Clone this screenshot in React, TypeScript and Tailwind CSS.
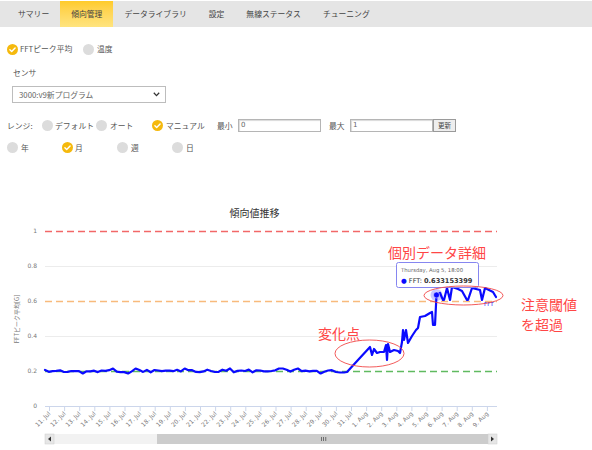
import React from "react";

function Radio({ checked }: { checked?: boolean }) {
  if (checked) {
    return (
      <svg width="11" height="11" viewBox="0 0 11 11" className="shrink-0">
        <circle cx="5.5" cy="5.5" r="5.5" fill="#f5b90d" />
        <path d="M2.9 5.7 L4.7 7.5 L8.1 3.9" fill="none" stroke="#fff" strokeWidth="1.4" strokeLinecap="round" strokeLinejoin="round" />
      </svg>
    );
  }
  return <span className="block w-[11px] h-[11px] rounded-full bg-[#dcdcdc] shrink-0" />;
}

function Opt({ checked, label, w, gap = "gap-[3px]" }: { checked?: boolean; label: string; w: string; gap?: string }) {
  return (
    <div className={`flex items-center ${gap} ${w} shrink-0`}>
      <Radio checked={checked} />
      <span className="whitespace-nowrap">{label}</span>
    </div>
  );
}

const tabs = ["サマリー", "傾向管理", "データライブラリ", "設定", "無線ステータス", "チューニング"];

function noise(i: number) {
  const s = Math.sin(i * 12.9898 + 78.233) * 43758.5453;
  return s - Math.floor(s);
}

function buildPath() {
  const pts: [number, number][] = [];
  for (let i = 0; ; i++) {
    const x = 45 + i * 3.775;
    if (x > 332) break;
    const r = noise(i);
    let y = 371 + (r - 0.5) * 3.2;
    if (r > 0.93) y = 368.5;
    if (r < 0.06) y = 373.5;
    pts.push([x, y]);
  }
  const tail: [number, number][] = [
    [336, 372], [340, 372.5], [344, 372.5], [347, 372], [358, 360], [370, 347], [372, 355], [374, 349], [377, 353], [380, 352], [384, 352],
    [386, 345], [387, 360], [388, 344], [390, 352], [394, 350], [398, 351], [400, 353], [402, 342], [403, 330], [404, 340],
    [406, 330], [408, 343], [412, 336], [416, 330], [418, 328], [420, 317], [425, 316], [430, 313], [432, 312], [433, 325],
    [435, 325], [436.5, 295], [440, 293], [443, 300], [444, 300], [447, 288], [450, 300], [452, 287], [458, 289], [462, 291],
    [467, 300], [468, 300], [472, 288], [476, 289], [480, 290], [482, 300], [485, 288], [489, 290], [493, 292], [496, 297],
  ];
  const all = pts.concat(tail);
  return all.map((p, i) => `${i === 0 ? "M" : "L"}${p[0].toFixed(1)} ${p[1].toFixed(1)}`).join(" ");
}

const days = [
  ...Array.from({ length: 21 }, (_, i) => `${11 + i}. Jul`),
  ...Array.from({ length: 9 }, (_, i) => `${1 + i}. Aug`),
];

const dashXs = Array.from({ length: 42 }, (_, i) => 45 + i * 11).filter((x) => x < 497);

function Dashes({ y, fillColor }: { y: number; fillColor: string }) {
  return (
    <g>
      {dashXs.map((x) => (
        <rect key={x} x={x} y={y - 0.25} width={Math.min(7, 497 - x)} height="1.5" style={{ fill: fillColor }} />
      ))}
    </g>
  );
}

function Chart() {
  const yVals: [string, number][] = [["1", 231], ["0.8", 266], ["0.6", 301], ["0.4", 336], ["0.2", 371], ["0", 406]];
  return (
    <svg width="592" height="250" viewBox="0 200 592 250" className="block font-['DejaVu_Sans','Noto_Sans_CJK_JP',sans-serif]">
      <text x="254.5" y="216.5" fontSize="10" fill="#333" textAnchor="middle" fontFamily="'Noto Sans CJK JP', sans-serif">傾向値推移</text>
      <rect x="45" y="266" width="452" height="1" fill="#ececec" />
      <rect x="45" y="336" width="452" height="1" fill="#ececec" />
      <Dashes y={231} fillColor="rgb(242,104,104)" />
      <Dashes y={301} fillColor="rgb(248,186,124)" />
      <Dashes y={371} fillColor="rgb(96,186,96)" />
      <rect x="45" y="406" width="452" height="1" fill="#ccd6eb" />
      {yVals.map(([l, y]) => (
        <text key={l} x="37" y={y + 2} fontSize="6" fill="#777" textAnchor="end">{l}</text>
      ))}
      <text x="0" y="0" fontSize="6" fill="#777" textAnchor="middle" transform="translate(19 319) rotate(-90)" fontFamily="'Noto Sans CJK JP', sans-serif">FFTピーク平均[G]</text>
      {days.map((d, i) => {
        const x = 49 + i * 15.1;
        return (
          <g key={d}>
            <rect x={x} y="407" width="1" height="4" fill="#ccd6eb" />
            <text x={x + 2} y="414" fontSize="6" fill="#777" textAnchor="end" transform={`rotate(-45 ${x + 2} 414)`}>{d}</text>
          </g>
        );
      })}
      <path d={buildPath()} fill="none" stroke="#0a0aff" strokeWidth="2.2" strokeLinejoin="round" strokeLinecap="round" />
      <circle cx="436.5" cy="295" r="6" fill="#0a0aff" fillOpacity="0.22" />
      <circle cx="436.5" cy="295" r="3" fill="#0a0aff" stroke="#fff" strokeWidth="0.5" />
      <text x="484" y="306" fontSize="5.5" fill="#0a0aff">FFT</text>
      {/* tooltip */}
      <rect x="396.5" y="262.5" width="82" height="25" rx="2" fill="#fff" fillOpacity="0.94" stroke="#8686f0" strokeWidth="1" />
      <text x="401" y="272" fontSize="5.3" fill="#666">Thursday, Aug 5, 18:00</text>
      <text x="401" y="283" fontSize="6.6" fill="#333">
        <tspan fill="#0a0aff">●</tspan> FFT: <tspan fontWeight="bold">0.633153399</tspan>
      </text>
      {/* annotations */}
      <ellipse cx="369.5" cy="353.5" rx="34.5" ry="13.5" fill="none" stroke="#f04848" strokeWidth="0.9" />
      <ellipse cx="463.5" cy="295.5" rx="39.5" ry="9.5" fill="none" stroke="#f04848" strokeWidth="0.9" />
      <g fontFamily="'Noto Sans CJK JP', sans-serif" fontSize="14" fill="#ff4646">
        <text x="388" y="258">個別データ詳細</text>
        <text x="521" y="309.5">注意閾値</text>
        <text x="521" y="330">を超過</text>
        <text x="318" y="339">変化点</text>
      </g>
      {/* scrollbar */}
      <rect x="45" y="434" width="452" height="10" fill="#f2f2f2" />
      <rect x="157" y="434" width="332" height="10" fill="#cccccc" />
      <rect x="45" y="434" width="9" height="10" fill="#e6e6e6" stroke="#cccccc" strokeWidth="0.5" />
      <path d="M51 436.5 L51 441.5 L48 439 Z" fill="#333" />
      <rect x="488" y="434" width="9" height="10" fill="#e6e6e6" stroke="#cccccc" strokeWidth="0.5" />
      <path d="M491 436.5 L491 441.5 L494 439 Z" fill="#333" />
      <g fill="#555">
        <rect x="321" y="437" width="0.8" height="4" />
        <rect x="323.2" y="437" width="0.8" height="4" />
        <rect x="325.4" y="437" width="0.8" height="4" />
      </g>
    </svg>
  );
}

export default function App() {
  return (
    <div className="w-[592px] h-[450px] bg-white overflow-hidden text-[7.8px] leading-none text-[#555] font-['Noto_Sans_CJK_JP','Noto_Sans',sans-serif]">
      <div className="h-[1px]" />
      <div className="h-[26px] bg-[#e5e5e5] flex pl-[7px]">
        {tabs.map((t) => (
          <div
            key={t}
            className={
              t === "傾向管理"
                ? "px-[11px] flex items-center text-[#444] bg-linear-to-b from-[#ffcb28] to-[#ffe47e]"
                : "px-[11px] flex items-center text-[#444]"
            }
          >
            {t}
          </div>
        ))}
      </div>

      <div className="mt-[16px] h-[12px] flex items-center pl-[7px]">
        <Opt checked label="FFTピーク平均" w="w-[76px]" gap="gap-[2px]" />
        <Opt label="温度" w="w-[40px]" gap="gap-[3px]" />
      </div>

      <div className="mt-[12px] h-[11px] flex items-center pl-[13px] text-[#555]">センサ</div>

      <div className="mt-[8px] ml-[12px] w-[154px] h-[17px] border border-[#bdbdbd] bg-white flex items-center justify-between pl-[6px] pr-[5px] text-[#666]">
        <span>3000:v9新プログラム</span>
        <svg width="7" height="5" viewBox="0 0 7 5">
          <path d="M0.8 0.8 L3.5 3.6 L6.2 0.8" fill="none" stroke="#333" strokeWidth="1.3" />
        </svg>
      </div>

      <div className="mt-[15px] h-[15px] flex items-center pl-[7px]">
        <span className="w-[35px] shrink-0">レンジ:</span>
        <Opt label="デフォルト" w="w-[54px]" gap="gap-[2px]" />
        <Opt label="オート" w="w-[56px]" gap="gap-[3px]" />
        <Opt checked label="マニュアル" w="w-[65px]" gap="gap-[3px]" />
        <span className="w-[21px] shrink-0">最小</span>
        <div className="w-[83px] h-[13px] shrink-0 border border-[#b5b5b5] shadow-[inset_1px_1px_1px_rgba(0,0,0,0.15)] flex items-center pl-[2px] text-[7px] text-[#666] font-['DejaVu_Sans',sans-serif]">0</div>
        <span className="ml-[8px] w-[21px] shrink-0">最大</span>
        <div className="w-[83px] h-[13px] shrink-0 border border-[#b5b5b5] shadow-[inset_1px_1px_1px_rgba(0,0,0,0.15)] flex items-center pl-[2px] text-[7px] text-[#666] font-['DejaVu_Sans',sans-serif]">1</div>
        <div className="w-[23px] h-[13px] shrink-0 border border-[#9a9a9a] bg-[#eeeeee] flex items-center justify-center text-[6.5px] text-[#444]">更新</div>
      </div>

      <div className="mt-[9px] h-[11px] flex items-center pl-[7px]">
        <Opt label="年" w="w-[55px]" gap="gap-[3px]" />
        <Opt checked label="月" w="w-[55px]" gap="gap-[2px]" />
        <Opt label="週" w="w-[55px]" gap="gap-[3px]" />
        <Opt label="日" w="w-[55px]" gap="gap-[3px]" />
      </div>

      <div className="mt-[47px]">
        <Chart />
      </div>
    </div>
  );
}
